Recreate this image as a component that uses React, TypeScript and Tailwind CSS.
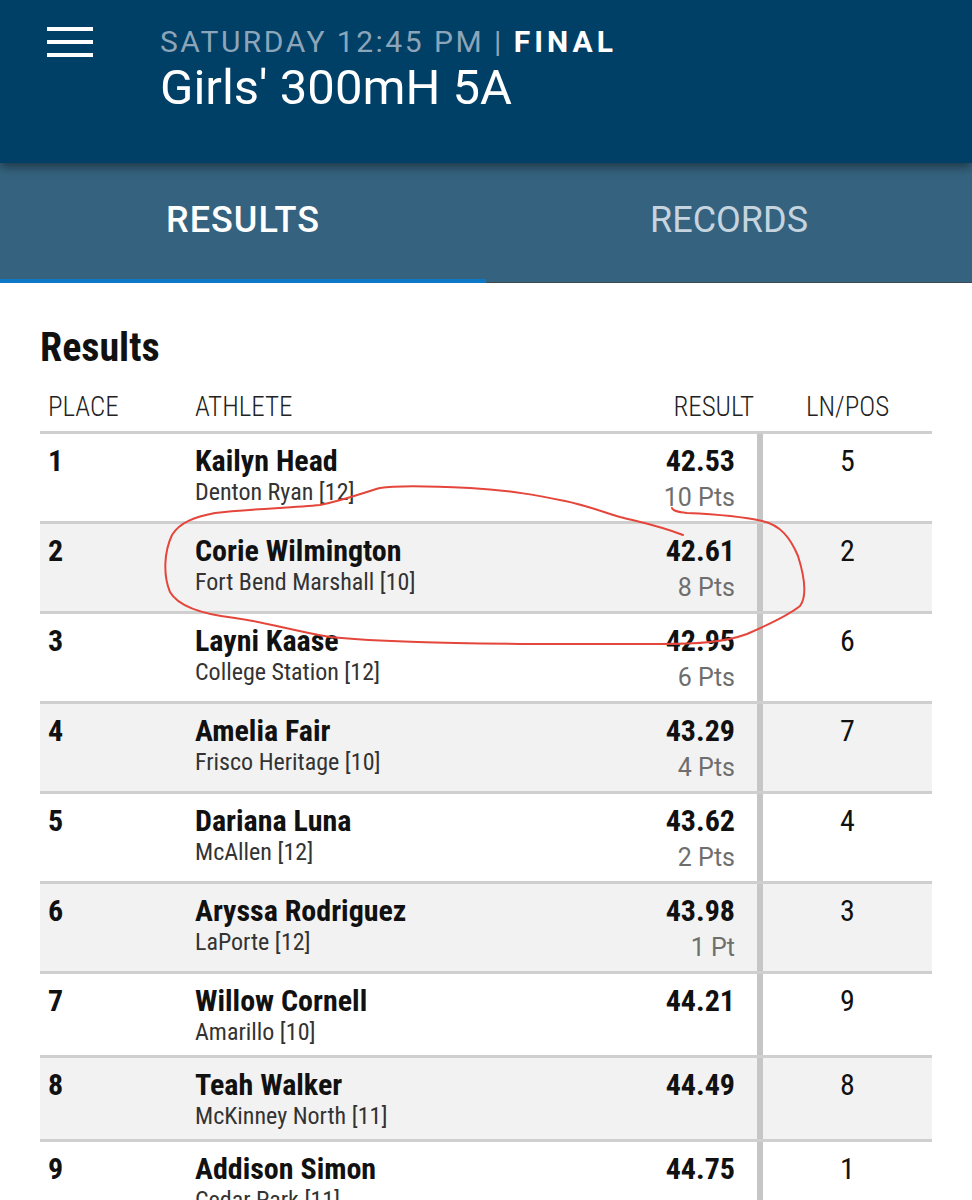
import React from "react";

type Row = {
  place: number;
  name: string;
  school: string;
  result: string;
  pts?: string;
  lane: number;
};

const rows: Row[] = [
  { place: 1, name: "Kailyn Head", school: "Denton Ryan [12]", result: "42.53", pts: "10 Pts", lane: 5 },
  { place: 2, name: "Corie Wilmington", school: "Fort Bend Marshall [10]", result: "42.61", pts: "8 Pts", lane: 2 },
  { place: 3, name: "Layni Kaase", school: "College Station [12]", result: "42.95", pts: "6 Pts", lane: 6 },
  { place: 4, name: "Amelia Fair", school: "Frisco Heritage [10]", result: "43.29", pts: "4 Pts", lane: 7 },
  { place: 5, name: "Dariana Luna", school: "McAllen [12]", result: "43.62", pts: "2 Pts", lane: 4 },
  { place: 6, name: "Aryssa Rodriguez", school: "LaPorte [12]", result: "43.98", pts: "1 Pt", lane: 3 },
  { place: 7, name: "Willow Cornell", school: "Amarillo [10]", result: "44.21", lane: 9 },
  { place: 8, name: "Teah Walker", school: "McKinney North [11]", result: "44.49", lane: 8 },
  { place: 9, name: "Addison Simon", school: "Cedar Park [11]", result: "44.75", lane: 1 },
];

function Hamburger() {
  return (
    <div className="flex w-[46px] flex-col gap-[9px] pt-[27px]">
      <span className="h-[4px] w-full bg-white" />
      <span className="h-[4px] w-full bg-white" />
      <span className="h-[4px] w-full bg-white" />
    </div>
  );
}

function ResultRow({ r }: { r: Row }) {
  const shaded = r.place % 2 === 0;
  return (
    <div
      className={`flex border-b-[3px] border-[#cfcfcf] ${shaded ? "bg-[#f2f2f2]" : "bg-white"}`}
    >
      <div className="w-[155px] shrink-0 pl-[8px] pt-[11px] pb-[8px] text-[30px] font-bold leading-[32px] text-[#111]">
        {r.place}
      </div>
      <div className="min-w-0 flex-1 pt-[11px] pb-[8px]">
        <div className="text-[30px] font-bold leading-[32px] text-[#111]">{r.name}</div>
        <div className="text-[24px] leading-[30px] text-[#333]">{r.school}</div>
      </div>
      <div className="w-[203px] shrink-0 border-r-[6px] border-[#c6c6c6] pr-[22px] pt-[11px] pb-[8px] text-right">
        <div className="text-[30px] font-bold leading-[32px] text-[#111]">{r.result}</div>
        {r.pts && (
          <div className="mt-[6px] font-['Roboto',sans-serif] text-[25px] leading-[30px] text-[#6e6e6e]">
            {r.pts}
          </div>
        )}
      </div>
      <div className="w-[169px] shrink-0 pt-[11px] text-center text-[30px] leading-[32px] text-[#111]">
        {r.lane}
      </div>
    </div>
  );
}

export default function App() {
  return (
    <div className="relative h-[1200px] w-[972px] overflow-hidden bg-white font-['Roboto_Condensed','Roboto',sans-serif]">
      {/* top bar */}
      <header className="relative z-10 flex h-[163px] bg-[#003f66] pl-[47px] font-['Roboto',sans-serif] shadow-[0_4px_10px_rgba(0,0,0,0.45)]">
        <Hamburger />
        <div className="pl-[67px] pt-[24px]">
          <div className="text-[30px] leading-[36px] tracking-[2.5px] text-[#8da5b9]">
            SATURDAY 12:45 PM | <span className="font-bold tracking-[4px] text-white">FINAL</span>
          </div>
          <div className="text-[49px] leading-[56px] text-white">Girls' 300mH 5A</div>
        </div>
      </header>

      {/* tabs */}
      <nav className="grid h-[120px] grid-cols-2 bg-[#35637f] font-['Roboto',sans-serif]">
        <div className="flex flex-col">
          <div className="flex-1 pt-[37px] text-center text-[36px] font-medium leading-[40px] tracking-[1px] text-white">
            RESULTS
          </div>
          <div className="h-[4px] bg-[#0f78c6]" />
        </div>
        <div className="flex flex-col">
          <div className="flex-1 pt-[37px] text-center text-[36px] leading-[40px] text-[#c6d4df]">
            RECORDS
          </div>
          <div className="h-[4px] border-b border-[#3c4b56]" />
        </div>
      </nav>

      {/* results table */}
      <main className="px-[40px] pt-[41px]">
        <h1 className="text-[40px] font-bold leading-[48px] text-[#111]">Results</h1>
        <div className="mt-[19px] flex pb-[8px] text-[27px] font-light leading-[32px] text-[#222]">
          <div className="w-[155px] shrink-0 pl-[8px]">PLACE</div>
          <div className="flex-1">ATHLETE</div>
          <div className="w-[203px] shrink-0 pr-[9px] text-right">RESULT</div>
          <div className="w-[169px] shrink-0 text-center">LN/POS</div>
        </div>
        <div className="border-t-[3px] border-[#cfcfcf]">
          {rows.map((r) => (
            <ResultRow key={r.place} r={r} />
          ))}
        </div>
      </main>

      {/* hand-drawn marker loop */}
      <svg
        className="pointer-events-none absolute left-0 top-0"
        width="972"
        height="1200"
        viewBox="0 0 972 1200"
        fill="none"
      >
        <path
          d="M683 535 C660 526 640 522 620 517 C600 511 585 505 565 501 C540 496 510 490 470 488 C430 486 398 485 380 488 C365 492 345 500 320 505 C290 508 245 509 215 513 C195 517 180 522 172 535 C164 552 163 575 170 592 C178 606 200 614 235 618 C265 622 290 630 330 637 C380 642 450 643 520 644 L660 644 C700 644 725 642 747 634 C770 624 790 614 800 606 C808 595 804 575 798 556 C790 537 780 525 762 521 C740 516 710 514 687 513 C678 512 673 511 672 508"
          stroke="#e4463b"
          strokeWidth="2"
          strokeLinecap="round"
          strokeLinejoin="round"
        />
      </svg>
    </div>
  );
}
